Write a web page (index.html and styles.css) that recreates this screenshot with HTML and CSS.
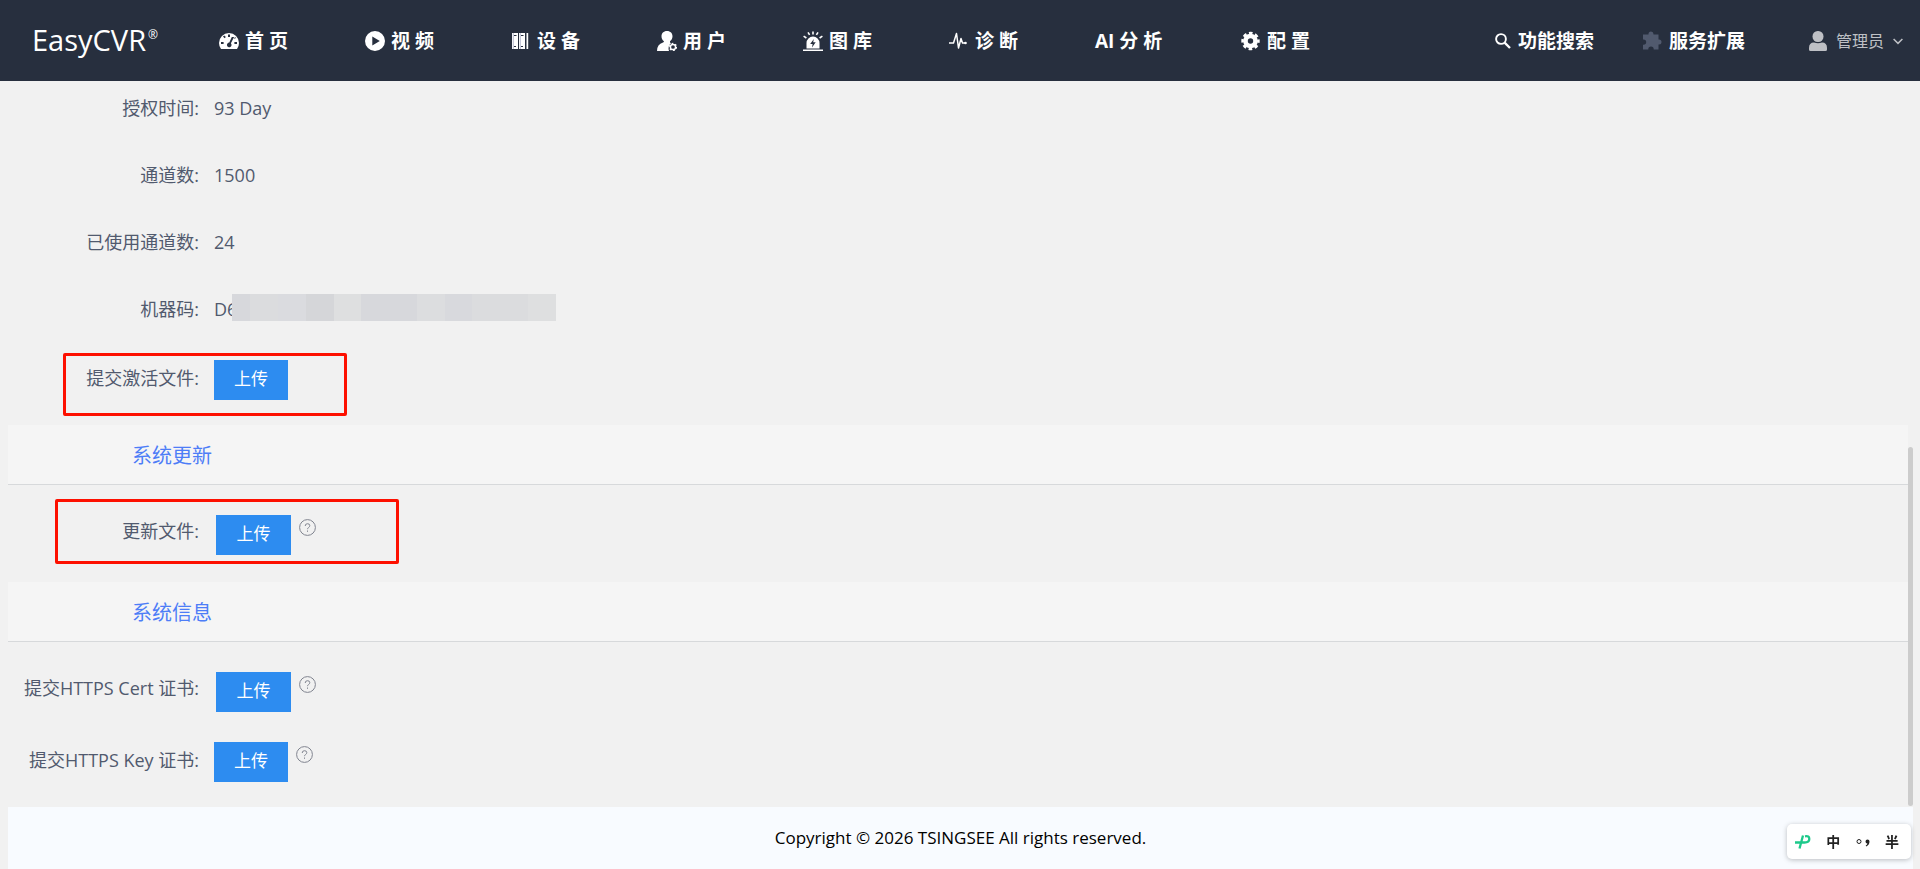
FILE: index.html
```
<!DOCTYPE html>
<html lang="zh-CN">
<head>
<meta charset="utf-8">
<title>EasyCVR</title>
<link rel="stylesheet" href="styles.css">
</head>
<body>
<header class="header">
	<a class="logo" href="#">EasyCVR<sup>®</sup></a>
	<nav class="nav">
		<a href="#">
			<svg class="icon" viewBox="0 0 20 20"><path fill="#fff" fill-rule="evenodd" d="M2 18Q0 15.500 0 12a10 10 0 0 1 20 0q0 3.500-2 6zM9 3.500v2.500h2v-2.500zM4 5.500l1.600 1.800 1.300-1.300-1.700-1.600zM2 11v2h2.600v-2zM15.400 11v2h2.600v-2zM12.800 6l-2.500 5.600a2.300 2.300 0 1 0 1.600.7l3.200-6.300zM15 8l1-2 1 1z"/></svg>
			<span>首 页</span>
		</a>
		<a href="#">
			<svg class="icon" viewBox="0 0 20 20"><path fill="#fff" fill-rule="evenodd" d="M10 0a10 10 0 1 1 0 20 10 10 0 0 1 0-20zM7.300 5.500v9l7.500-4.500z"/></svg>
			<span>视 频</span>
		</a>
		<a href="#">
			<svg class="icon" viewBox="0 0 20 20"><path fill="#fff" fill-rule="evenodd" d="M1 2h6v16h-6zM8 2h6v16h-6zM15.500 2h1.700v16h-1.700zM3 4v1h2.500v-1zM10 4v1h2.500v-1zM3 15v1h2v-1zM10 15v1h2v-1z"/><path stroke="#8b90b0" stroke-width=".6" d="M2.300 2v16M9.300 2v16"/></svg>
			<span>设 备</span>
		</a>
		<a href="#">
			<svg class="icon" viewBox="0 0 20 20"><path fill="#fff" d="M10 0c3.500 0 5.500 2.400 5.500 5.300 0 2.200-1 4-2.500 5q-.4 1.500 1 2-3.500 2.500-2 7.700H0q0-7 6-8.600 1.200-.4.900-1.200C5.200 9.200 4.500 7.400 4.500 5.300 4.500 2.400 6.500 0 10 0z"/><circle cx="16" cy="16" r="2.600" fill="none" stroke="#fff" stroke-width="1.500"/><circle cx="16" cy="16" r="3.600" fill="none" stroke="#fff" stroke-width="1.200" stroke-dasharray="1.700 2.070"/></svg>
			<span>用 户</span>
		</a>
		<a href="#">
			<svg class="icon" viewBox="0 0 20 20"><path fill="#fff" fill-rule="evenodd" d="M3.500 17.500V12a6.500 6.500 0 0 1 13 0v5.500zM10.800 8l-3.600 5h2.400l-.6 3.500 3.700-5.200h-2.500z"/><path fill="none" stroke="#fff" stroke-width="1.600" d="M0 19.200h20M10 .5v3M5 1.300l1.600 2.600M15 1.300l-1.600 2.600M.6 5.200l2.800 1.800M19.400 5.200l-2.800 1.800"/></svg>
			<span>图 库</span>
		</a>
		<a href="#">
			<svg class="icon" viewBox="0 0 20 20"><path fill="none" stroke="#fff" stroke-width="1.500" stroke-linejoin="round" d="M0 12h4.500L7.500 2.500 9.500 17 12 7.500l1.500 4.500h3"/><circle cx="16.500" cy="12" r="1.300" fill="#fff"/></svg>
			<span>诊 断</span>
		</a>
		<a href="#"><span>AI 分 析</span></a>
		<a href="#">
			<svg class="icon" viewBox="0 0 20 20"><circle cx="9.500" cy="10" r="5" fill="none" stroke="#fff" stroke-width="4.600"/><circle cx="9.500" cy="10" r="7.900" fill="none" stroke="#fff" stroke-width="2.600" stroke-dasharray="3.600 2.605" stroke-dashoffset="1.800"/></svg>
			<span>配 置</span>
		</a>
	</nav>
	<div class="tools">
		<a class="tool" href="#">
			<svg class="icon-search" viewBox="0 0 16 16"><circle cx="6" cy="6" r="4.900" fill="none" stroke="#fff" stroke-width="1.900"/><path stroke="#fff" stroke-width="2.300" d="M9.600 9.600l5.400 5.400"/></svg>
			<span>功能搜索</span>
		</a>
		<a class="tool" href="#">
			<svg class="icon" viewBox="0 0 20 20"><path fill="#515a6e" d="M1.500 3.500H6.500V3a2.500 2.500 0 0 1 5 0v.5h5V8.500h.5a2.500 2.500 0 0 1 0 5h-.5V18.500h-4.800v-.4a2.700 2.700 0 0 0-5.400 0v.4H1V13.800h.5a2.700 2.700 0 0 0 0-5.400H1V3.500z"/></svg>
			<span>服务扩展</span>
		</a>
		<a class="user" href="#">
			<svg class="icon-user" viewBox="0 0 18 20"><rect x="3.500" y="0" width="11" height="11" rx="5.200" fill="#bec0c5"/><path fill="#bec0c5" d="M0 18.500V17q0-5.500 5-5.500 4 1.500 8 0 5 0 5 5.500v1.500q0 1.500-1.500 1.500h-15Q0 20 0 18.500z"/></svg>
			<span>管理员</span>
			<svg class="icon-arrow" viewBox="0 0 10 10"><path fill="none" stroke="#bec0c5" stroke-width="1.500" d="M.6 3l4.400 4.400L9.400 3"/></svg>
		</a>
	</div>
</header>

<main class="content">
	<dl class="info">
		<div class="info-item"><dt>授权时间:</dt><dd>93 Day</dd></div>
		<div class="info-item"><dt>通道数:</dt><dd>1500</dd></div>
		<div class="info-item"><dt>已使用通道数:</dt><dd>24</dd></div>
		<div class="info-item"><dt>机器码:</dt><dd>D6<span class="mask"></span></dd></div>
	</dl>
	<div class="upload">
		<label for="license">提交激活文件:</label>
		<button type="button" id="license">上传</button>
		<div class="mark mark-license"></div>
	</div>

	<h2 class="section-title">系统更新</h2>
	<div class="section">
		<div class="upload upload-inset">
			<label for="update">更新文件:</label>
			<button type="button" id="update">上传</button>
			<svg class="help" viewBox="0 0 17 17"><circle cx="8.500" cy="8.500" r="7.900"/><path d="M6.200 7Q6.200 4.700 8.500 4.700T10.800 6.700Q10.800 7.700 9.600 8.500 8.500 9.200 8.500 10.200M8.500 11.500v1.300"/></svg>
			<div class="mark mark-update"></div>
		</div>
	</div>

	<h2 class="section-title">系统信息</h2>
	<div class="section">
		<div class="upload upload-inset">
			<label for="cert">提交HTTPS Cert 证书:</label>
			<button type="button" id="cert">上传</button>
			<svg class="help" viewBox="0 0 17 17"><circle cx="8.500" cy="8.500" r="7.900"/><path d="M6.200 7Q6.200 4.700 8.500 4.700T10.800 6.700Q10.800 7.700 9.600 8.500 8.500 9.200 8.500 10.200M8.500 11.500v1.300"/></svg>
		</div>
		<div class="upload">
			<label for="key">提交HTTPS Key 证书:</label>
			<button type="button" id="key">上传</button>
			<svg class="help" viewBox="0 0 17 17"><circle cx="8.500" cy="8.500" r="7.900"/><path d="M6.200 7Q6.200 4.700 8.500 4.700T10.800 6.700Q10.800 7.700 9.600 8.500 8.500 9.200 8.500 10.200M8.500 11.500v1.300"/></svg>
		</div>
	</div>
	<div class="scrollbar"></div>
</main>

<footer class="footer">Copyright © 2026 TSINGSEE All rights reserved.</footer>

<div class="ime">
	<svg class="ime-logo" viewBox="0 0 16 14"><path fill="none" stroke="#1dc98a" stroke-width="2.300" d="M0 7.500h9.500Q14.300 7.500 14.300 4T10 1.300M8 .5L4.500 13.500"/></svg>
	<span>中</span>
	<svg class="ime-punct" viewBox="0 0 14 14"><circle cx="3" cy="6.500" r="2" fill="none" stroke="#222" stroke-width="1"/><path fill="#222" d="M9.500 6.500a2 2 0 1 1 4 0q0 3.500-3.300 4.900l-.5-.9q1.400-.7 1.700-2-1.900 0-1.900-2z"/></svg>
	<span>半</span>
</div>
</body>
</html>
```
FILE: styles.css
```
*
{
	box-sizing: border-box;
}

body
{
	display: flex;
	flex-direction: column;
	min-height: 100vh;
	margin: 0;
	background: #f1f1f1;
	color: #515a6e;
	font: 18px/28px "Open Sans", "Noto Sans CJK SC", sans-serif;
}

a
{
	color: #fff;
	text-decoration: none;
}

.header
{
	display: flex;
	align-items: center;
	height: 81px;
	padding: 0 17px 0 32px;
	background: #272f3e;
	white-space: nowrap;
}

.logo
{
	display: flex;
	width: 187px;
	padding-bottom: 2px;
	font-size: 29px;
	line-height: 40px;
}

.logo sup
{
	margin-left: 2px;
	font-size: 12px;
	line-height: 30px;
}

.nav
{
	display: flex;
	font-size: 19px;
	font-weight: bold;
}

.nav a
{
	display: flex;
	align-items: center;
	gap: 6px;
	width: 146px;
}

.icon
{
	flex: none;
	width: 20px;
	height: 20px;
}

.tools
{
	display: flex;
	align-items: center;
	margin-left: auto;
}

.tool
{
	display: flex;
	align-items: center;
	gap: 7px;
	margin-right: 48px;
	font-size: 19px;
	font-weight: bold;
}

.icon-search
{
	width: 16px;
	height: 16px;
}

.user
{
	display: flex;
	align-items: center;
	gap: 9px;
	margin-left: 16px;
	color: #bec0c5;
	font-size: 16px;
}

.icon-user
{
	width: 18px;
	height: 20px;
}

.icon-arrow
{
	width: 10px;
	height: 10px;
}

.content
{
	position: relative;
	padding: 13px 12px 0 8px;
}

.info
{
	display: flex;
	flex-direction: column;
	gap: 39px;
	margin: 0 0 37px;
}

.info-item
{
	display: flex;
	gap: 15px;
}

.info dt, .upload label
{
	width: 191px;
	text-align: right;
	white-space: nowrap;
}

.info dd
{
	position: relative;
	margin: 0;
}

.mask
{
	position: absolute;
	top: -1px;
	left: 18px;
	width: 324px;
	height: 27px;
	background: linear-gradient(90deg, #d7d8dc 18px, #dbdcde 18px, #dbdcde 46px, #dadbdf 46px, #dadbdf 74px, #d5d6d9 74px, #d5d6d9 102px, #dedfe0 102px, #dedfe0 129px, #d7d8dc 129px, #d7d8dc 185px, #dcdddf 185px, #dcdddf 213px, #d8d9dd 213px, #d8d9dd 240px, #dbdcde 240px, #dbdcde 296px, #dedfe0 296px);
}

.upload
{
	display: flex;
	align-items: flex-start;
	position: relative;
	height: 40px;
}

.upload label
{
	line-height: 36px;
}

.upload button
{
	width: 74px;
	height: 40px;
	margin-left: 15px;
	padding: 0 0 2px;
	border: 0;
	background: #2d8cf0;
	color: #fff;
	font: 17px/38px "Open Sans", "Noto Sans CJK SC", sans-serif;
}

.upload-inset label
{
	line-height: 32px;
}

.upload-inset button
{
	width: 75px;
	margin-left: 17px;
}

.help
{
	width: 17px;
	height: 17px;
	margin: 4px 0 0 8px;
	fill: none;
	stroke: #80848f;
	stroke-width: 1;
}

/* red frames drawn over the form */
.mark
{
	position: absolute;
	border: 3px solid #fd1000;
	border-radius: 2px;
}

.mark-license
{
	top: -7px;
	left: 55px;
	width: 284px;
	height: 63px;
}

.mark-update
{
	top: -16px;
	left: 47px;
	width: 344px;
	height: 65px;
}

.section-title
{
	height: 60px;
	margin: 25px 0 0;
	padding-left: 124px;
	border-bottom: 1px solid #d7d9db;
	background: #f5f5f5;
	color: #4d7df7;
	font-size: 20px;
	font-weight: normal;
	line-height: 62px;
}

.section
{
	display: flex;
	flex-direction: column;
	gap: 30px;
	padding: 30px 0 25px;
}

.section + .section-title
{
	margin-top: 2px;
}

.scrollbar
{
	position: absolute;
	right: 7px;
	bottom: 1px;
	width: 5px;
	height: 359px;
	border-radius: 3px;
	background: #ccc;
}

.footer
{
	flex: 1 0 62px;
	margin: 0 7px 0 8px;
	background: #f8fbff;
	color: #000;
	font-size: 17px;
	line-height: 62px;
	text-align: center;
}

.ime
{
	display: flex;
	align-items: center;
	justify-content: space-between;
	position: fixed;
	right: 9px;
	bottom: 10px;
	width: 124px;
	height: 35px;
	padding: 0 12px 0 8px;
	border-radius: 5px;
	background: #fff;
	box-shadow: 0 1px 5px rgba(0, 0, 0, .25);
	color: #222;
	font-size: 14px;
	font-weight: bold;
}

.ime-logo
{
	width: 16px;
	height: 14px;
}

.ime-punct
{
	width: 14px;
	height: 14px;
}
```
